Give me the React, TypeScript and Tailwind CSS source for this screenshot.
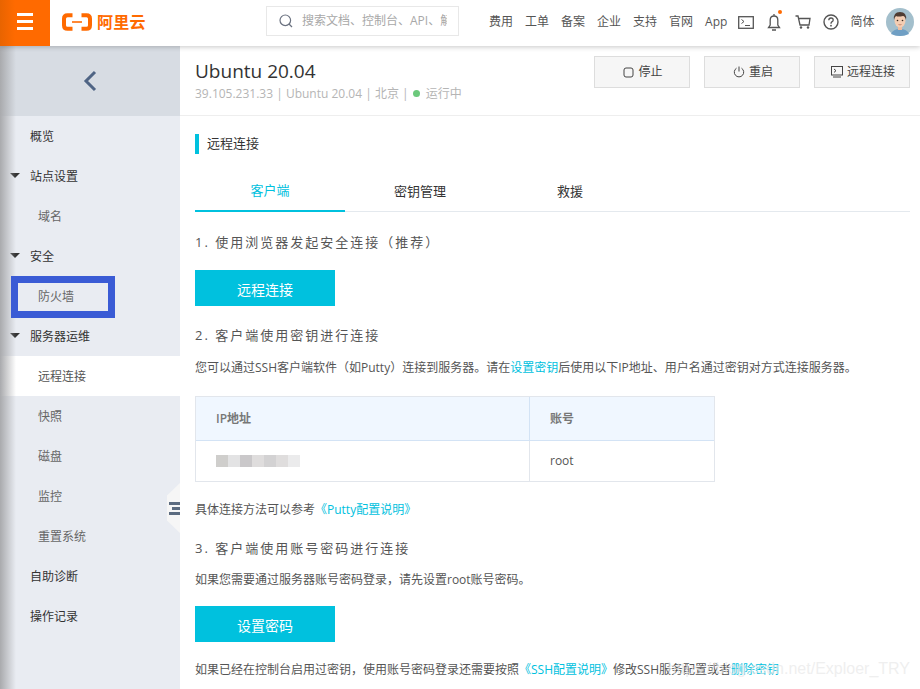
import { ReactNode } from "react";

const font = '"Open Sans", "Noto Sans CJK SC", sans-serif';

const navLinks = ["费用", "工单", "备案", "企业", "支持", "官网", "App"];

const sideItems: { label: string; level: number; active?: boolean }[] = [
  { label: "概览", level: 0 },
  { label: "站点设置", level: 1 },
  { label: "域名", level: 2 },
  { label: "安全", level: 1 },
  { label: "防火墙", level: 2 },
  { label: "服务器运维", level: 1 },
  { label: "远程连接", level: 2, active: true },
  { label: "快照", level: 2 },
  { label: "磁盘", level: 2 },
  { label: "监控", level: 2 },
  { label: "重置系统", level: 2 },
  { label: "自助诊断", level: 0 },
  { label: "操作记录", level: 0 },
];

function Logo() {
  return (
    <svg width="30" height="18" viewBox="0 0 30 18" fill="none">
      <path
        d="M10.5 2.2H5.5Q2 2.2 2 5.7V12.3Q2 15.8 5.5 15.8H10.5M19.5 2.2H24.5Q28 2.2 28 5.7V12.3Q28 15.8 24.5 15.8H19.5"
        stroke="#ff6a00"
        strokeWidth="4"
      />
      <path d="M10 9H20" stroke="#ff6a00" strokeWidth="1.6" />
    </svg>
  );
}

function Avatar() {
  return (
    <svg width="28" height="28" viewBox="0 0 28 28">
      <circle cx="14" cy="14" r="14" fill="#a3bfcc" />
      <path d="M5 26Q7 21 14 21Q21 21 23 26Q19 28 14 28Q9 28 5 26Z" fill="#6f9fc4" />
      <rect x="12" y="17" width="4" height="5" fill="#eebd9f" />
      <ellipse cx="14" cy="12.5" rx="5.5" ry="7" fill="#f4cdb2" />
      <path d="M8 12Q7 4 14 4Q21 4 20 12Q19 8 17 8Q12 9 10 8Q8.5 9 8 12Z" fill="#4f3c32" />
      <circle cx="11.5" cy="12.5" r="0.8" fill="#3a2a20" />
      <circle cx="16.5" cy="12.5" r="0.8" fill="#3a2a20" />
      <path d="M12.5 16.5Q14 17.3 15.5 16.5" stroke="#b5654f" strokeWidth="0.7" fill="none" />
    </svg>
  );
}

function Header() {
  return (
    <div className="relative z-20 flex h-[46px] items-center bg-white shadow-[0_1px_5px_rgba(0,0,0,0.22)]">
      <div className="flex h-[46px] w-[50px] flex-col items-center justify-center gap-[4px] bg-gradient-to-r from-[#e86400] to-[#ff6a00] to-30% pb-[3px]">
        <span className="h-[3px] w-4 bg-white" />
        <span className="h-[3px] w-4 bg-white" />
        <span className="h-[3px] w-4 bg-white" />
      </div>
      <div className="ml-[12px] flex w-[204px] items-center gap-[5px] pb-[3px]">
        <Logo />
        <span className="text-[16px] font-bold tracking-[0.3px] text-[#ff6a00]">阿里云</span>
      </div>
      <div className="mb-[4px] flex h-[30px] w-[193px] items-center border border-[#e8e8e8] pl-3">
        <svg width="14" height="14" viewBox="0 0 14 14" fill="none" className="shrink-0">
          <circle cx="6.3" cy="6.3" r="5.3" stroke="#6b7280" strokeWidth="1.2" />
          <path d="M10 10L13 13" stroke="#6b7280" strokeWidth="1.2" />
        </svg>
        <div className="ml-[9px] w-[145px] overflow-hidden whitespace-nowrap text-[12px] text-[#a8a8a8]">搜索文档、控制台、API、解决方案</div>
      </div>
      <div className="flex flex-1 items-center pb-[2px]">
        <div className="ml-[30px] flex items-center gap-3 text-[12px] text-[#555]">
          {navLinks.map((n) => (
            <span key={n}>{n}</span>
          ))}
        </div>
        <svg width="16" height="13" viewBox="0 0 16 13" fill="none" className="ml-[11px]">
          <rect x="0.7" y="0.7" width="14.6" height="11.6" stroke="#555" strokeWidth="1.3" />
          <path d="M3.5 3.5L6 5.5L3.5 7.5M7 9.5H12" stroke="#555" />
        </svg>
        <div className="relative ml-[13px]">
          <svg width="14" height="19" viewBox="0 0 14 19" fill="none">
            <path d="M7 1V3M3.2 12V7Q3.2 3 7 3Q10.8 3 10.8 7V12L12.5 14.5H1.5ZM5 17H9" stroke="#555" strokeWidth="1.3" />
          </svg>
          <span className="absolute right-[-1px] top-[-3px] h-1 w-1 rounded-full bg-[#ff6a00]" />
        </div>
        <svg width="16" height="14" viewBox="0 0 16 14" fill="none" className="ml-[14px]">
          <path d="M0.5 1H3L5 10H14L15 3.5H3.5" stroke="#555" strokeWidth="1.3" />
          <circle cx="6" cy="12.5" r="1.2" fill="#555" />
          <circle cx="13" cy="12.5" r="1.2" fill="#555" />
        </svg>
        <svg width="16" height="16" viewBox="0 0 16 16" fill="none" className="ml-[12px]">
          <circle cx="8" cy="8" r="7" stroke="#555" strokeWidth="1.4" />
          <path d="M5.8 6.3Q5.8 4 8 4Q10.2 4 10.2 6Q10.2 7.2 8.8 7.9Q8 8.4 8 9.7" stroke="#555" strokeWidth="1.3" />
          <circle cx="8" cy="11.7" r="0.9" fill="#555" />
        </svg>
        <span className="ml-[11px] text-[12px] text-[#555]">简体</span>
        <div className="ml-[12px]">
          <Avatar />
        </div>
      </div>
    </div>
  );
}

function Sidebar() {
  return (
    <div className="relative flex w-[180px] shrink-0 flex-col bg-[#e9ecf2]">
      <div className="flex h-[70px] items-center justify-center bg-[#d7dce3]">
        <svg width="14" height="22" viewBox="0 0 14 22" fill="none">
          <path d="M12 2L3 11L12 20" stroke="#4f6484" strokeWidth="3" />
        </svg>
      </div>
      {sideItems.map((it) => (
        <div
          key={it.label}
          className={`flex h-10 items-center pt-[2px] text-[12px] ${
            it.active ? "bg-white text-[#555]" : it.level === 2 ? "text-[#666]" : "text-[#333]"
          } ${it.level === 2 ? "pl-[38px]" : "pl-[30px]"}`}
        >
          {it.level === 1 && (
            <span className="-ml-5 mr-[10px] mb-[4px] h-0 w-0 border-x-[5px] border-t-[5px] border-x-transparent border-t-[#333]" />
          )}
          {it.label}
        </div>
      ))}
      <div className="flex-1" />
      {/* left edge shadow */}
      <div className="pointer-events-none absolute inset-y-0 left-0 w-4 bg-gradient-to-r from-[#a9aaad] to-transparent" />
      {/* blue annotation box */}
      <div className="absolute left-[11px] top-[230px] h-[42px] w-[104px] border-[7px] border-[#3a5bd5]" />
      {/* collapse handle */}
      <div className="absolute right-0 top-[437px] flex h-[50px] w-[13px] items-center justify-end bg-[#f6f6f6] [clip-path:polygon(100%_0,100%_100%,0_75%,0_25%)]">
        <div className="flex flex-col gap-[2px]">
          <span className="h-[3px] w-[11px] bg-[#5b6b80]" />
          <span className="ml-[3px] h-[3px] w-[8px] bg-[#5b6b80]" />
          <span className="h-[3px] w-[11px] bg-[#5b6b80]" />
        </div>
      </div>
    </div>
  );
}

function ActionButton({ icon, label, width }: { icon: ReactNode; label: string; width: string }) {
  return (
    <div className={`flex h-8 items-center justify-center gap-[4px] border border-[#ddd] bg-[#f6f6f6] pl-[2px] text-[12px] text-[#444] ${width}`}>
      {icon}
      {label}
    </div>
  );
}

function Link({ children }: { children: ReactNode }) {
  return <span className="text-[#00c1de]">{children}</span>;
}

function BigButton({ label }: { label: string }) {
  return (
    <div className="flex h-9 w-[140px] items-center justify-center bg-[#00c1de] pt-[2px] text-[14px] text-white">{label}</div>
  );
}

function StepTitle({ children, className }: { children: ReactNode; className: string }) {
  return <div className={`text-[13px] leading-5 tracking-[2px] text-[#555] ${className}`}>{children}</div>;
}

function Content() {
  return (
    <div className="flex-1">
      <div className="flex h-[70px] justify-between border-b border-[#eeeeee] pl-[15px] pr-[10px] pt-[10px]">
        <div>
          <div className="text-[19px] leading-[30px] text-[#333]">Ubuntu 20.04</div>
          <div className="flex items-center text-[12px] leading-[15px] text-[#b5b5b5]">
            39.105.231.33&nbsp;|&nbsp;Ubuntu 20.04&nbsp;|&nbsp;北京&nbsp;|&nbsp;
            <span className="mr-[6px] ml-[1px] h-[7px] w-[7px] rounded-full bg-[#6cc97c]" />
            运行中
          </div>
        </div>
        <div className="flex gap-[14px]">
          <ActionButton
            width="w-[96px]"
            label="停止"
            icon={
              <svg width="11" height="11" viewBox="0 0 11 11" fill="none">
                <rect x="1" y="1" width="9" height="9" rx="2" stroke="#444" />
              </svg>
            }
          />
          <ActionButton
            width="w-[96px]"
            label="重启"
            icon={
              <svg width="12" height="12" viewBox="0 0 12 12" fill="none">
                <path d="M6 0.5V5.5M3.5 2.2A4.7 4.7 0 1 0 8.5 2.2" stroke="#444" />
              </svg>
            }
          />
          <ActionButton
            width="w-[96px]"
            label="远程连接"
            icon={
              <svg width="12" height="12" viewBox="0 0 12 12" fill="none">
                <rect x="0.5" y="0.5" width="11" height="8.5" stroke="#444" />
                <path d="M3 3L5 4.7L3 6.4M2 11H10" stroke="#444" />
              </svg>
            }
          />
        </div>
      </div>

      <div className="pl-[15px] pr-[10px]">
        <div className="mt-[18px] flex h-5 items-center border-l-[4px] border-[#00c1de] pl-2 text-[13px] text-[#333]">远程连接</div>

        <div className="mt-[18px] flex h-[40px] border-b border-[#e4e9ee] text-[13px] text-[#333]">
          <div className="-mb-px flex w-[150px] items-center justify-center border-b-[2px] border-[#00c1de] text-[#00c1de]">客户端</div>
          <div className="flex w-[150px] items-center justify-center">密钥管理</div>
          <div className="flex w-[150px] items-center justify-center">救援</div>
        </div>

        <StepTitle className="mt-[20px]">1. 使用浏览器发起安全连接（推荐）</StepTitle>
        <div className="mt-[18px]">
          <BigButton label="远程连接" />
        </div>
        <StepTitle className="mt-[19px]">2. 客户端使用密钥进行连接</StepTitle>
        <div className="mt-[13px] whitespace-nowrap text-[12px] leading-5 text-[#555]">
          您可以通过SSH客户端软件（如Putty）连接到服务器。请在<Link>设置密钥</Link>后使用以下IP地址、用户名通过密钥对方式连接服务器。
        </div>

        <div className="mt-[18px] w-[520px] border border-[#e2e6ec] text-[12px] text-[#555]">
          <div className="flex h-[44px] items-center border-b border-[#d3e3f5] bg-[#f0f7ff] font-semibold text-[#777]">
            <div className="flex h-full w-[334px] items-center border-r border-[#d3e3f5] pl-5">IP地址</div>
            <div className="pl-5">账号</div>
          </div>
          <div className="flex h-10 items-center">
            <div className="flex h-full w-[334px] items-center border-r border-[#e2e6ec] pl-5">
              <div className="flex h-3">
                <span className="w-3 bg-[#cfcecc]" />
                <span className="w-3 bg-[#e3e3e4]" />
                <span className="w-3 bg-[#cac8ca]" />
                <span className="w-3 bg-[#dfdddd]" />
                <span className="w-3 bg-[#d3d2d3]" />
                <span className="w-3 bg-[#dfdddd]" />
                <span className="w-3 bg-[#ebebec]" />
              </div>
            </div>
            <div className="pl-5">root</div>
          </div>
        </div>

        <div className="mt-[18px] text-[12px] leading-5 text-[#555]">
          具体连接方法可以参考<Link>《Putty配置说明》</Link>
        </div>
        <StepTitle className="mt-[18px]">3. 客户端使用账号密码进行连接</StepTitle>
        <div className="mt-[12px] text-[12px] leading-5 text-[#555]">如果您需要通过服务器账号密码登录，请先设置root账号密码。</div>
        <div className="mt-[16px]">
          <BigButton label="设置密码" />
        </div>
        <div className="mt-[18px] whitespace-nowrap text-[12px] leading-5 text-[#555]">
          如果已经在控制台启用过密钥，使用账号密码登录还需要按照<Link>《SSH配置说明》</Link>修改SSH服务配置或者<Link>删除密钥</Link>
        </div>
      </div>
    </div>
  );
}

export default function App() {
  return (
    <div className="relative h-[689px] w-[920px] overflow-hidden bg-white" style={{ fontFamily: font }}>
      <Header />
      <div className="flex h-[643px]">
        <Sidebar />
        <Content />
      </div>
      <span className="absolute bottom-[8px] right-[10px] text-[16px] text-[#e8e8e8]/70 [font-family:'Liberation_Sans',sans-serif]">https://blog.csdn.net/Exploer_TRY</span>
    </div>
  );
}
